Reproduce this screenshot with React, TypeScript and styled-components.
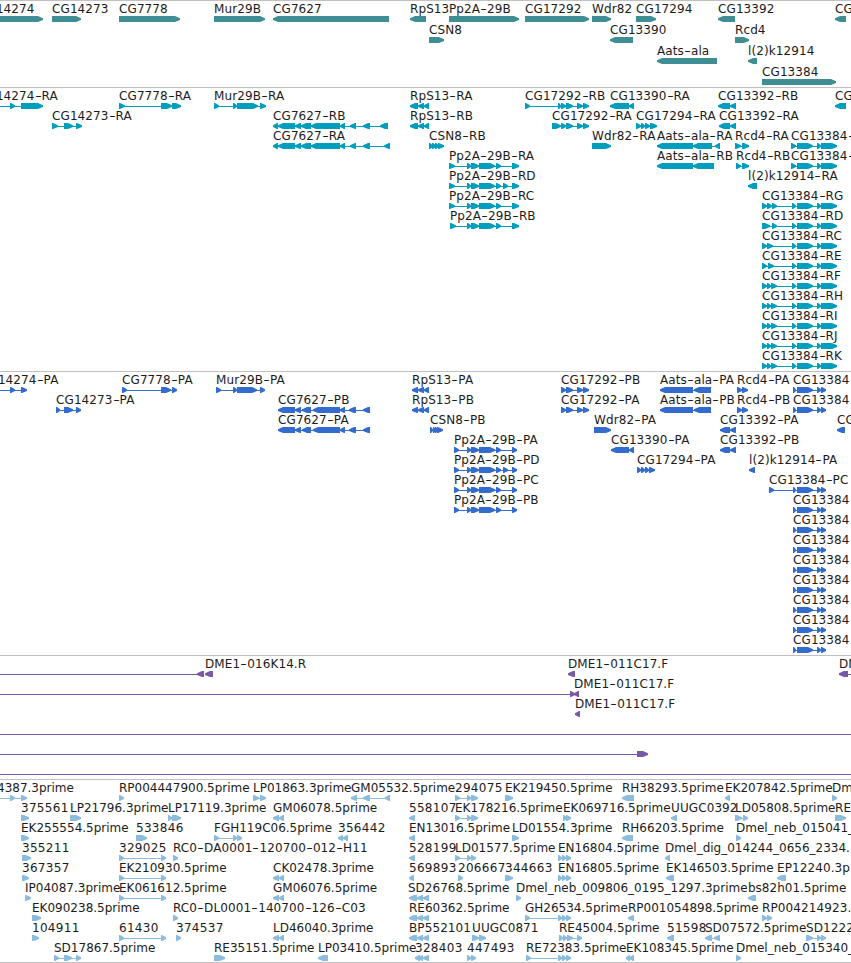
import styled, { createGlobalStyle } from 'styled-components';

type Strand = '>' | '<';

interface Feature {
  name: string;
  x: number;
  strand: Strand;
  blocks: string;
  // connector end points, when the feature runs past its visible blocks
  line?: [number, number];
}

interface TrackData {
  id: string;
  color: string;
  laneHeight: number;
  padding: number;
  lanes: Feature[][];
}

const VIEW_WIDTH = 851;
const HEAD = 6;

const f = (name: string, x: number, strand: Strand, blocks: string, line?: [number, number]): Feature => ({
  name,
  x,
  strand,
  blocks,
  line,
});

const RPS13 = '410-418 418-424 424-429';
const RPS13_P = '412-418 418-424 424-429';
const CG7627 = '273-278 278-295 295-301 301-311 311-340 340-345 350-356 363-370';
const CG7627_P = '278-295 295-301 302-311 313-340 340-345 349-356 363-370';
const PP2A = '467-471 471-479 479-495 496-501';
const CG17292 = '561-566 566-573 577-583 583-589';
const CG13384 = '792-796 797-813 817-821 821-837';
const CG13384_P = '793-796 797-813 817-821 821-826';
const EST_CG7778 = '119-124 161-166';
const EST_CG7627 = '273-279 279-284';
const EST_CG17292 = '558-562 562-566 566-571';

const genes: Feature[][] = [
  [
    f('CG14274', -22, '>', '-22-43'),
    f('CG14273', 52, '>', '52-81'),
    f('CG7778', 119, '>', '119-180'),
    f('Mur29B', 214, '>', '214-265'),
    f('CG7627', 273, '<', '273-389'),
    f('RpS13', 410, '<', '410-426'),
    f('Pp2A-29B', 449, '>', '449-519'),
    f('CG17292', 525, '>', '525-589'),
    f('Wdr82', 592, '>', '592-611'),
    f('CG17294', 636, '>', '636-656'),
    f('CG13392', 718, '<', '718-735'),
    f('CG', 835, '<', '835-846'),
  ],
  [f('CSN8', 429, '>', '429-444'), f('CG13390', 610, '<', '610-633'), f('Rcd4', 735, '>', '735-749')],
  [f('Aats-ala', 657, '<', '657-717'), f('l(2)k12914', 748, '<', '748-757')],
  [f('CG13384', 762, '>', '762-836')],
];

const transcripts: Feature[][] = [
  [
    f('CG14274-RA', -22, '>', '10-15 21-43', [-22, 21]),
    f('CG7778-RA', 119, '>', '119-125 161-172 172-181'),
    f('Mur29B-RA', 214, '>', '214-219 233-237 237-258 260-266'),
    f('RpS13-RA', 410, '<', RPS13),
    f('CG17292-RB', 525, '>', `525-530 558-561 ${CG17292}`),
    f('CG13390-RA', 610, '<', '610-629 629-634'),
    f('CG13392-RB', 718, '<', '718-730 730-736'),
    f('CG', 835, '<', '835-846'),
  ],
  [
    f('CG14273-RA', 52, '>', '52-58 64-73 76-82'),
    f('CG7627-RB', 273, '<', `${CG7627} 380-388`),
    f('RpS13-RB', 410, '<', RPS13),
    f('CG17292-RA', 552, '>', `552-561 ${CG17292}`),
    f('CG17294-RA', 636, '>', '636-641 641-645 645-650 650-657'),
    f('CG13392-RA', 719, '<', '719-730 730-736'),
  ],
  [
    f('CG7627-RA', 273, '<', `${CG7627} 384-390`),
    f('CSN8-RB', 429, '>', '429-433 432-436 435-439 438-444'),
    f('Wdr82-RA', 592, '>', '592-611'),
    f('Aats-ala-RA', 657, '<', '657-693 693-712 715-720'),
    f('Rcd4-RA', 735, '>', '735-741 742-749'),
    f('CG13384-', 791, '>', `791-796 797-813 817-821 821-837`),
  ],
  [
    f('Pp2A-29B-RA', 449, '>', `449-455 ${PP2A} 512-519`),
    f('Aats-ala-RB', 657, '<', '657-693 693-714'),
    f('Rcd4-RB', 736, '>', '736-741 742-749'),
    f('CG13384-', 791, '>', `791-796 797-813 817-821 821-837`),
  ],
  [f('Pp2A-29B-RD', 449, '>', `449-455 ${PP2A} 503-508 512-519`), f('l(2)k12914-RA', 748, '<', '748-757')],
  [f('Pp2A-29B-RC', 449, '>', `449-455 ${PP2A} 512-519`), f('CG13384-RG', 762, '>', `762-767 767-772 772-777 ${CG13384}`)],
  [f('Pp2A-29B-RB', 450, '>', `450-456 ${PP2A} 512-519`), f('CG13384-RD', 762, '>', `762-770 772-777 ${CG13384}`)],
  [f('CG13384-RC', 762, '>', `762-767 767-773 ${CG13384}`)],
  [f('CG13384-RE', 762, '>', `762-767 768-774 ${CG13384}`)],
  ...['RF', 'RH', 'RI', 'RJ', 'RK'].map((iso) => [
    f(`CG13384-${iso}`, 762, '>', `762-767 767-771 771-777 ${CG13384}`),
  ]),
];

const proteins: Feature[][] = [
  [
    f('CG14274-PA', -20, '>', '10-15 21-27', [-20, 21]),
    f('CG7778-PA', 122, '>', '122-127 161-171 172-177'),
    f('Mur29B-PA', 216, '>', '216-221 233-237 237-257 260-265'),
    f('RpS13-PA', 412, '<', RPS13_P),
    f('CG17292-PB', 561, '>', CG17292),
    f('Aats-ala-PA', 660, '<', '660-693 694-711'),
    f('Rcd4-PA', 737, '>', '737-742 742-748'),
    f('CG13384', 793, '>', CG13384_P),
  ],
  [
    f('CG14273-PA', 56, '>', '56-60 64-73 76-81'),
    f('CG7627-PB', 278, '<', CG7627_P),
    f('RpS13-PB', 412, '<', RPS13_P),
    f('CG17292-PA', 561, '>', CG17292),
    f('Aats-ala-PB', 660, '<', '660-693 694-711'),
    f('Rcd4-PB', 737, '>', '737-742 742-748'),
    f('CG13384', 793, '>', CG13384_P),
  ],
  [
    f('CG7627-PA', 278, '<', CG7627_P),
    f('CSN8-PB', 430, '>', '430-433 433-436 435-438 437-443'),
    f('Wdr82-PA', 594, '>', '594-611'),
    f('CG13392-PA', 720, '<', '720-730 730-736'),
    f('CG', 837, '<', '837-845'),
  ],
  [
    f('Pp2A-29B-PA', 454, '>', `454-459 ${PP2A} 512-517`),
    f('CG13390-PA', 611, '<', '611-629 629-634'),
    f('CG13392-PB', 720, '<', '720-730 730-736'),
  ],
  [
    f('Pp2A-29B-PD', 454, '>', `454-459 ${PP2A} 503-508 512-517`),
    f('CG17294-PA', 637, '>', '637-641 641-645 645-649 649-655'),
    f('l(2)k12914-PA', 749, '<', '749-755'),
  ],
  [f('Pp2A-29B-PC', 454, '>', `454-459 ${PP2A} 512-517`), f('CG13384-PC', 769, '>', `769-774 ${CG13384_P}`)],
  [f('Pp2A-29B-PB', 454, '>', `454-459 ${PP2A} 512-517`), f('CG13384', 793, '>', CG13384_P)],
  ...Array.from({ length: 7 }, () => [f('CG13384', 793, '>', CG13384_P)]),
];

const clones: Feature[][] = [
  [
    f('', 0, '<', '197-204', [0, 204]),
    f('DME1-016K14.R', 205, '<', '205-213'),
    f('DME1-011C17.F', 568, '<', '568-575'),
    f('DME1', 839, '<', '839-848', [840, 851]),
  ],
  [f('', 0, '>', '570-575', [0, 575]), f('DME1-011C17.F', 574, '<', '574-579')],
  [f('DME1-011C17.F', 575, '<', '575-580')],
  [f('', 0, '>', '', [0, 851])],
  [f('', 0, '>', '637-648', [0, 640])],
  [f('', 0, '>', '', [0, 851])],
];

const ests: Feature[][] = [
  [
    f('4387.3prime', -3, '>', '10-15 21-27', [0, 21]),
    f('RP004447900.5prime', 119, '>', '119-124'),
    f('LP01863.3prime', 253, '>', '253-259 260-266'),
    f('GM05532.5prime', 351, '<', '351-357 363-370 385-390'),
    f('294075', 455, '>', '455-460 467-471 471-478'),
    f('EK219450.5prime', 505, '>', '505-513'),
    f('RH38293.5prime', 622, '<', '622-634'),
    f('EK207842.5prime', 725, '<', '725-730'),
    f('Dm', 832, '>', '832-837'),
  ],
  [
    f('375561', 21, '>', '21-29'),
    f('LP21796.3prime', 70, '>', '70-81'),
    f('LP17119.3prime', 168, '>', '168-172 172-181'),
    f('GM06078.5prime', 273, '<', EST_CG7627),
    f('558107', 409, '<', '409-415'),
    f('EK178216.5prime', 455, '>', '455-460 467-471 471-478'),
    f('EK069716.5prime', 563, '>', '563-567 566-571'),
    f('UUGC0392', 671, '<', '671-677'),
    f('LD05808.5prime', 735, '>', '735-742 743-748'),
    f('RE', 835, '>', '835-846'),
  ],
  [
    f('EK255554.5prime', 21, '>', '21-29'),
    f('533846', 136, '>', '136-147'),
    f('FGH119C06.5prime', 214, '>', '214-219 233-237 237-242'),
    f('356442', 338, '<', '338-343 343-348'),
    f('EN13016.5prime', 409, '<', '409-415'),
    f('LD01554.3prime', 512, '>', '512-519'),
    f('RH66203.5prime', 622, '<', '622-633'),
    f('Dmel_neb_015041_', 736, '>', '736-741'),
  ],
  [
    f('355211', 22, '>', '22-31'),
    f('329025', 119, '>', EST_CG7778),
    f('RC0-DA0001-120700-012-H11', 173, '>', '173-178'),
    f('528199', 409, '<', '409-415'),
    f('LD01577.5prime', 455, '>', '455-460 467-471 471-476'),
    f('EN16804.5prime', 558, '>', EST_CG17292),
    f('Dmel_dig_014244_0656_2334.', 665, '<', '665-670'),
  ],
  [
    f('367357', 22, '>', '22-29'),
    f('EK210930.5prime', 119, '>', EST_CG7778),
    f('CK02478.3prime', 273, '<', EST_CG7627),
    f('569893', 409, '<', '409-414'),
    f('206667', 458, '>', '458-463'),
    f('344663', 505, '>', '505-513'),
    f('EN16805.5prime', 558, '>', EST_CG17292),
    f('EK146503.5prime', 666, '<', '666-674'),
    f('EP12240.3p', 777, '<', '777-786'),
  ],
  [
    f('IP04087.3prime', 25, '>', '25-31'),
    f('EK061612.5prime', 119, '>', EST_CG7778),
    f('GM06076.5prime', 273, '<', EST_CG7627),
    f('SD26768.5prime', 408, '<', '409-417 417-423 423-429'),
    f('Dmel_neb_009806_0195_1297.3prime', 516, '>', '516-521'),
    f('bs82h01.5prime', 748, '<', '748-756'),
  ],
  [
    f('EK090238.5prime', 32, '>', '32-41'),
    f('RC0-DL0001-140700-126-C03', 173, '>', '173-178'),
    f('RE60362.5prime', 409, '<', '409-417 417-423 423-429'),
    f('GH26534.5prime', 525, '>', `525-530 ${EST_CG17292}`),
    f('RP001054898.5prime', 628, '<', '628-634'),
    f('RP004214923.', 762, '>', '762-767 767-772'),
  ],
  [
    f('104911', 32, '>', '32-39'),
    f('61430', 119, '>', EST_CG7778),
    f('374537', 176, '>', '176-181'),
    f('LD46040.3prime', 273, '<', EST_CG7627),
    f('BP552101', 409, '<', '409-417 417-423 423-429'),
    f('UUGC0871', 472, '>', '472-479 479-486'),
    f('RE45004.5prime', 559, '>', '559-563 563-567 567-573 577-582'),
    f('51598', 667, '<', '667-674'),
    f('SD07572.5prime', 705, '<', '705-712 714-720'),
    f('SD1222', 806, '>', '806-813 817-821 821-826'),
  ],
  [
    f('SD17867.5prime', 54, '>', '54-59 64-72 76-81'),
    f('RE35151.5prime', 214, '>', '214-225'),
    f('LP03410.5prime', 318, '<', '318-328'),
    f('328403', 415, '<', '415-420 419-423 423-429'),
    f('447493', 467, '>', '467-471 471-476'),
    f('RE72383.5prime', 526, '>', `526-531 ${EST_CG17292}`),
    f('EK108345.5prime', 626, '<', '626-630 629-634'),
    f('Dmel_neb_015340_', 736, '>', '736-741'),
  ],
];

const tracks: TrackData[] = [
  { id: 'genes', color: '#3f8e93', laneHeight: 21, padding: 2, lanes: genes },
  { id: 'transcripts', color: '#009ebc', laneHeight: 20, padding: 3, lanes: transcripts },
  { id: 'proteins', color: '#336ccc', laneHeight: 20, padding: 3, lanes: proteins },
  { id: 'clones', color: '#7959a6', laneHeight: 20, padding: 3, lanes: clones },
  { id: 'ests', color: '#8bbcdd', laneHeight: 20, padding: 2, lanes: ests },
];

const GlobalStyle = createGlobalStyle`
  body {
    margin: 0;
    background: #ffffff;
  }
`;

const Browser = styled.main`
  width: ${VIEW_WIDTH}px;
  height: 963px;
  overflow: hidden;
  background: #ffffff;
  border-bottom: 1px solid #c0c0c0;
  box-sizing: border-box;
`;

const Track = styled.section<{ $padding: number }>`
  border-top: 1px solid #c0c0c0;
  padding-bottom: ${({ $padding }) => $padding}px;
`;

const Lane = styled.div<{ $height: number }>`
  position: relative;
  height: ${({ $height }) => $height}px;
`;

const Label = styled.span<{ $spacing: number }>`
  position: absolute;
  top: 1px;
  font-family: 'DejaVu Sans', sans-serif;
  font-size: 12px;
  line-height: 15px;
  letter-spacing: ${({ $spacing }) => $spacing}px;
  white-space: pre;
  color: #1c1c1c;
`;

const Hyphen = styled.span`
  display: inline-block;
  width: 7px;
  text-align: center;
  transform: scaleX(1.5);
`;

const Glyphs = styled.svg<{ $color: string }>`
  display: block;
  padding-top: 15px;
  fill: ${({ $color }) => $color};
`;

function parseBlocks(blocks: string): [number, number][] {
  return [...blocks.matchAll(/(-?\d+)-(\d+)/g)].map((m) => [Number(m[1]), Number(m[2])]);
}

function labelSpacing(name: string) {
  if (/^\d+$/.test(name)) return 0.3;
  if (name.includes('prime') || name.includes('_')) return 0;
  return 0.1;
}

function arrowPoints(start: number, end: number, strand: Strand) {
  const head = Math.min(HEAD, end - start);
  if (strand === '>') {
    return `${start},0 ${end - head + 1},0 ${end},2.2 ${end},4 ${end - head + 1},6 ${start},6`;
  }
  return `${end},0 ${start + head - 1},0 ${start},2.2 ${start},4 ${start + head - 1},6 ${end},6`;
}

function FeatureGlyph({ feature }: { feature: Feature }) {
  const blocks = parseBlocks(feature.blocks);
  const [from, to] = feature.line ?? [blocks[0][0], blocks[blocks.length - 1][1]];

  return (
    <g>
      <rect x={from} y={3} width={to - from} height={1} />
      {blocks.map(([start, end]) => (
        <polygon key={start} points={arrowPoints(start, end, feature.strand)} />
      ))}
    </g>
  );
}

function FeatureLabel({ feature }: { feature: Feature }) {
  const parts = feature.name.split('-');
  return (
    <Label $spacing={labelSpacing(feature.name)} style={{ left: feature.x }}>
      {parts.map((part, i) => (
        <span key={i}>
          {i > 0 && <Hyphen>-</Hyphen>}
          {part}
        </span>
      ))}
    </Label>
  );
}

export default function App() {
  return (
    <>
      <GlobalStyle />
      <Browser>
        {tracks.map((track) => (
          <Track key={track.id} $padding={track.padding}>
            {track.lanes.map((lane, i) => (
              <Lane key={i} $height={track.laneHeight}>
                <Glyphs $color={track.color} width={VIEW_WIDTH} height={6}>
                  {lane.map((feature, j) => (
                    <FeatureGlyph key={j} feature={feature} />
                  ))}
                </Glyphs>
                {lane
                  .filter((feature) => feature.name)
                  .map((feature, j) => (
                    <FeatureLabel key={j} feature={feature} />
                  ))}
              </Lane>
            ))}
          </Track>
        ))}
      </Browser>
    </>
  );
}
